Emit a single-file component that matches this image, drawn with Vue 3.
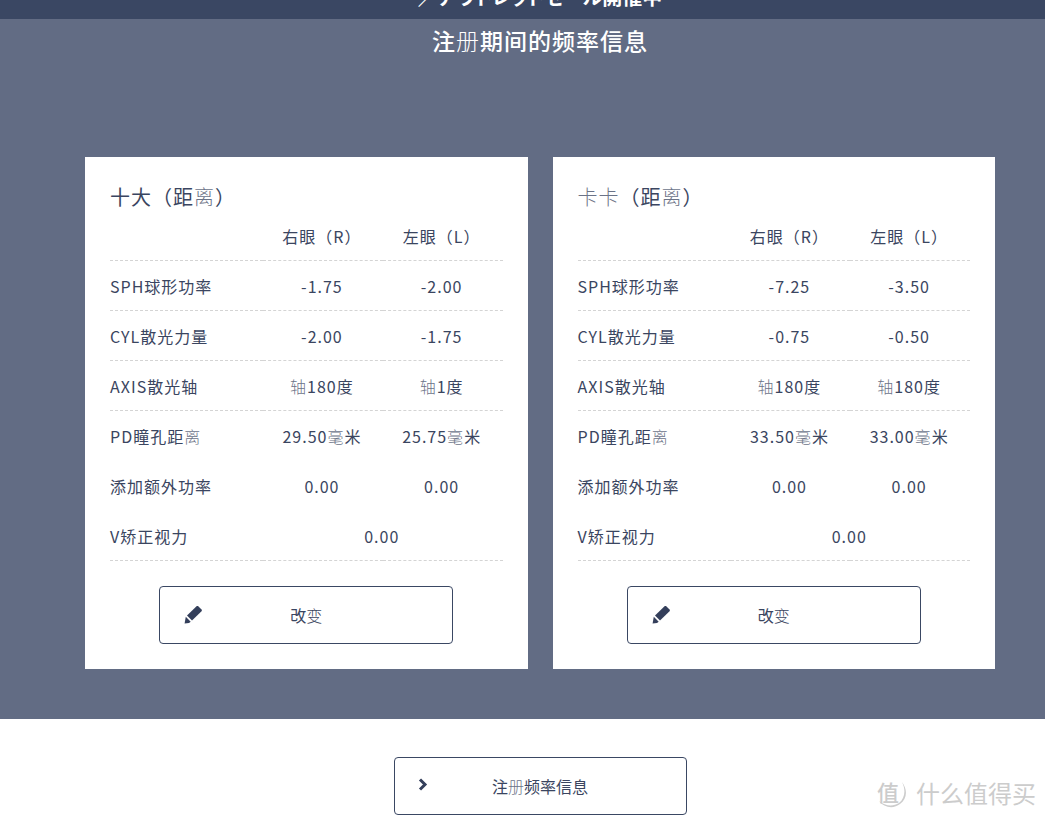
<script setup>
const parts = (source) =>
  source
    .split(/(\[[^\]]+\])/)
    .filter(Boolean)
    .map((s) => (s[0] === '[' ? { text: s.slice(1, -1), thin: true } : { text: s, thin: false }))

const labels = ['SPH球形功率', 'CYL散光力量', 'AXIS散光轴', 'PD瞳孔距[离]', '添加额外功率']
const cards = [
  {
    title: '十大（距[离]）',
    rows: [['-1.75', '-2.00'], ['-2.00', '-1.75'], ['[轴]180度', '[轴]1度'], ['29.50[毫]米', '25.75[毫]米'], ['0.00', '0.00']],
    vision: '0.00',
  },
  {
    title: '[卡卡]（距[离]）',
    rows: [['-7.25', '-3.50'], ['-0.75', '-0.50'], ['[轴]180度', '[轴]180度'], ['33.50[毫]米', '33.00[毫]米'], ['0.00', '0.00']],
    vision: '0.00',
  },
]
</script>

<template>
  <div class="page">
    <header class="banner"><a href="#">／アウトレットセール開催中</a></header>
    <main>
      <section class="info">
        <h1><span v-for="(p, k) in parts('注[册]期间的频率信息')" :key="k" :class="{ thin: p.thin }">{{ p.text }}</span></h1>
        <div class="cards">
          <article v-for="(card, i) in cards" :key="i" class="card">
            <h2><span v-for="(p, k) in parts(card.title)" :key="k" :class="{ thin: p.thin }">{{ p.text }}</span></h2>
            <table>
              <colgroup><col class="name" /><col /><col /></colgroup>
              <thead>
                <tr class="ruled head"><td></td><th scope="col">右眼（R）</th><th scope="col">左眼（L）</th></tr>
              </thead>
              <tbody>
                <tr v-for="(row, r) in card.rows" :key="r" :class="{ ruled: r < 3 }">
                  <th scope="row"><span v-for="(p, k) in parts(labels[r])" :key="k" :class="{ thin: p.thin }">{{ p.text }}</span></th>
                  <td v-for="(cell, c) in row" :key="c"><span v-for="(p, k) in parts(cell)" :key="k" :class="{ thin: p.thin }">{{ p.text }}</span></td>
                </tr>
                <tr class="ruled">
                  <th scope="row">V矫正视力</th>
                  <td colspan="2">{{ card.vision }}</td>
                </tr>
              </tbody>
            </table>
            <button type="button" class="action">
              <svg width="18" height="18" viewBox="0 0 18 18" aria-hidden="true">
                <path d="M12.800 0H14L17.800 3.800V5L8 14.500 3 9.500Z" />
                <path d="M1.800 10.800 6.700 15.700 5 17 .6 17.400Z" />
              </svg>
              <span>改<span class="light">变</span></span>
            </button>
          </article>
        </div>
      </section>
      <section class="register">
        <button type="button" class="action">
          <svg width="18" height="18" viewBox="0 0 18 18" aria-hidden="true">
            <path class="chevron" d="M5 2.500 10 7.500 5 12.500" />
          </svg>
          <span>注<span class="thin">册</span>频率信息</span>
        </button>
      </section>
    </main>
    <div class="mark">
      <span class="seal">
        <svg width="30" height="30" viewBox="0 0 30 30" aria-hidden="true">
          <path d="M25 4C31 12 30 21 23 26C17 31 7 30 2 23C8 28 16 29 22 25C28 20 29 12 25 4Z" />
        </svg>
        <span>值</span>
      </span>
      <span>什么值得买</span>
    </div>
  </div>
</template>

<style>
body {
  background: #fff;
}
</style>

<style scoped>
.page {
  position: relative;
  color: #3a4560;
  font-family: "Noto Sans CJK JP", "Noto Sans CJK SC", sans-serif;
  font-size: 16px;
  line-height: 24px;
}
.banner {
  display: flex;
  align-items: flex-end;
  justify-content: center;
  height: 19px;
  padding-left: 35px;
  background: #3a4763;
}
.banner a {
  color: #fff;
  font-size: 20px;
  font-weight: 700;
  line-height: 44px;
  font-feature-settings: "palt";
  text-decoration: none;
}
.info {
  padding: 5px 50px 50px 85px;
  background: #626c84;
}
h1 {
  margin: 0 0 101px;
  color: #fff;
  font-size: 23px;
  font-weight: 500;
  line-height: 32px;
  letter-spacing: 1px;
  text-align: center;
}
.thin {
  font-family: "Noto Sans CJK SC", sans-serif;
  font-weight: 300;
  opacity: 0.75;
}
h1 .thin {
  opacity: 1;
}
.light {
  font-weight: 300;
}
.cards {
  display: grid;
  grid-template-columns: 1fr 1fr;
  gap: 25px;
}
.card {
  padding: 25px;
  background: #fff;
}
h2 {
  margin: 0;
  font-size: 20px;
  font-weight: 400;
  line-height: 30px;
  letter-spacing: 1px;
}
table {
  width: 100%;
  table-layout: fixed;
  border-collapse: collapse;
  letter-spacing: 1px;
}
.name {
  width: 39%;
}
tr {
  height: 50px;
}
tr.head {
  height: 48px;
}
tr.ruled {
  border-bottom: 1px dashed #d4d4d4;
}
th,
td {
  padding: 0 2px 0 0;
  font-weight: 400;
  text-align: center;
}
tbody th,
tbody td {
  padding-top: 2px;
}
th[scope="row"] {
  text-align: left;
}
.action {
  display: grid;
  grid-template-columns: 18px 1fr 18px;
  align-items: center;
  width: 75%;
  height: 58px;
  margin: 25px auto 0;
  padding: 0 24px;
  border: 1px solid #3a4763;
  border-radius: 4px;
  background: #fff;
  color: inherit;
  font: inherit;
  cursor: pointer;
}
.action svg {
  fill: #343f5b;
}
.action .chevron {
  fill: none;
  stroke: #343f5b;
  stroke-width: 3;
}
.register {
  padding: 38px 50px 4px 85px;
}
.register .action {
  width: 32%;
  min-width: 293px;
  margin: 0 auto;
  padding: 0 20px;
}
.mark {
  position: absolute;
  right: 9px;
  bottom: 11px;
  display: flex;
  align-items: center;
  gap: 9px;
  color: #ccc;
  font-family: "Noto Sans CJK SC", sans-serif;
  font-size: 24px;
  line-height: 30px;
}
.mark svg {
  fill: #ccc;
}
.seal {
  display: grid;
}
.seal > * {
  grid-area: 1 / 1;
}
.seal span {
  font-size: 22px;
  font-weight: 500;
  line-height: 26px;
}
</style>
